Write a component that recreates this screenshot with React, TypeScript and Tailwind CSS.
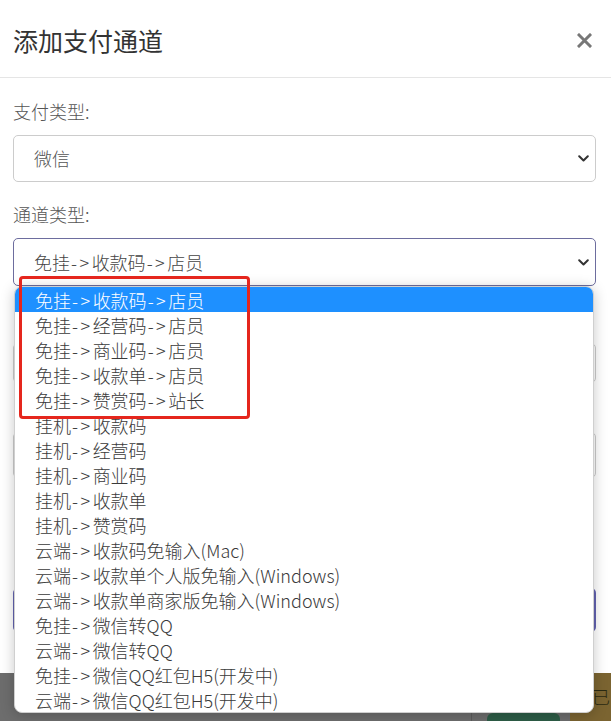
import React from "react";

const items = [
  "免挂->收款码->店员",
  "免挂->经营码->店员",
  "免挂->商业码->店员",
  "免挂->收款单->店员",
  "免挂->赞赏码->站长",
  "挂机->收款码",
  "挂机->经营码",
  "挂机->商业码",
  "挂机->收款单",
  "挂机->赞赏码",
  "云端->收款码免输入(Mac)",
  "云端->收款单个人版免输入(Windows)",
  "云端->收款单商家版免输入(Windows)",
  "免挂->微信转QQ",
  "云端->微信转QQ",
  "免挂->微信QQ红包H5(开发中)",
  "云端->微信QQ红包H5(开发中)",
];

function Label({ text }: { text: string }) {
  const parts = text.split("->");
  return (
    <span>
      {parts.map((p, i) => (
        <React.Fragment key={i}>
          {i > 0 && <span className="tracking-[2.5px] pl-[1px]">-&gt;</span>}
          {p}
        </React.Fragment>
      ))}
    </span>
  );
}

function Chevron() {
  return (
    <svg width="11" height="7" viewBox="0 0 11 7" fill="none">
      <path d="M1.2 1.2 L5.5 5.5 L9.8 1.2" stroke="#333" strokeWidth="2" strokeLinecap="round" strokeLinejoin="round" />
    </svg>
  );
}

export default function App() {
  return (
    <div className="relative w-[611px] h-[721px] overflow-hidden bg-[#6d6d6d] font-light font-['Noto_Sans_CJK_SC','Noto_Sans',sans-serif]">
      <div className="h-[673px] bg-white flex flex-col">
        <div className="h-[78px] border-b border-[#e5e5e5] flex items-center justify-between pl-[13px] pr-[19px] pt-[3px]">
          <div className="text-[25px] leading-none text-[#333] font-normal">添加支付通道</div>
          <svg width="15" height="15" viewBox="0 0 15 15">
            <path d="M2 2 L13 13 M13 2 L2 13" stroke="#777" strokeWidth="3" strokeLinecap="square" />
          </svg>
        </div>
        <div className="pl-[13px] pr-[15px] pt-[20px] flex flex-col">
          <div className="text-[18px] leading-[26px] text-[#555] mb-[11px]">支付类型:</div>
          <div className="h-[47px] border border-[#ccc] rounded-[5px] flex items-center justify-between pl-[20px] pr-[6px] text-[18px] text-[#555]">
            <span>微信</span>
            <Chevron />
          </div>
          <div className="mt-[19px] text-[18px] leading-[26px] text-[#555] mb-[11px]">通道类型:</div>
          <div className="h-[48px] border border-[#6d6d9e] rounded-[5px] flex items-center justify-between pl-[20px] pr-[6px] text-[18px] text-[#444]">
            <Label text="免挂->收款码->店员" />
            <Chevron />
          </div>
          <div className="mt-[20px] h-[26px] mb-[11px]" />
          <div className="h-[40px] border border-[#ccc] rounded-[5px]" />
          <div className="mt-[12px] h-[26px] mb-[11px]" />
          <div className="h-[46px] border border-[#ccc] rounded-[5px]" />
          <div className="mt-[20px] h-[26px]" />
          <div className="mt-[64px] h-[44px] rounded-[5px] bg-[#6262b0]" />
        </div>
      </div>
      <div className="flex h-[48px]">
        <div className="ml-[471px] w-px bg-[#5c5c5c]" />
        <div className="ml-[15px] w-[73px] mt-[40px] bg-[#2d5d47] rounded-t-[6px]" />
        <div className="ml-[10px] flex-1 bg-[#7b6431] pl-[22px] pt-[14px] text-[18px] leading-none text-[#2a2a12]">已</div>
      </div>

      <div className="absolute left-[14px] top-[286px] z-10 w-[580px] h-[427px] bg-white border border-[#cfcfcf] rounded-[8px] overflow-hidden shadow-[0_2px_14px_rgba(0,0,0,0.22)]">
        {items.map((t, i) => (
          <div
            key={i}
            className={
              i === 0
                ? "h-[25px] flex items-center pl-[20px] text-[18px] leading-none bg-[#1e90ff] text-white whitespace-nowrap"
                : "h-[25px] flex items-center pl-[20px] text-[18px] leading-none text-[#3a3a3a] whitespace-nowrap"
            }
          >
            <Label text={t} />
          </div>
        ))}
      </div>

      <div className="absolute left-[19px] top-[276px] z-20 w-[231px] h-[143px] border-[3px] border-[#e5261d] rounded-[4px]" />
    </div>
  );
}
